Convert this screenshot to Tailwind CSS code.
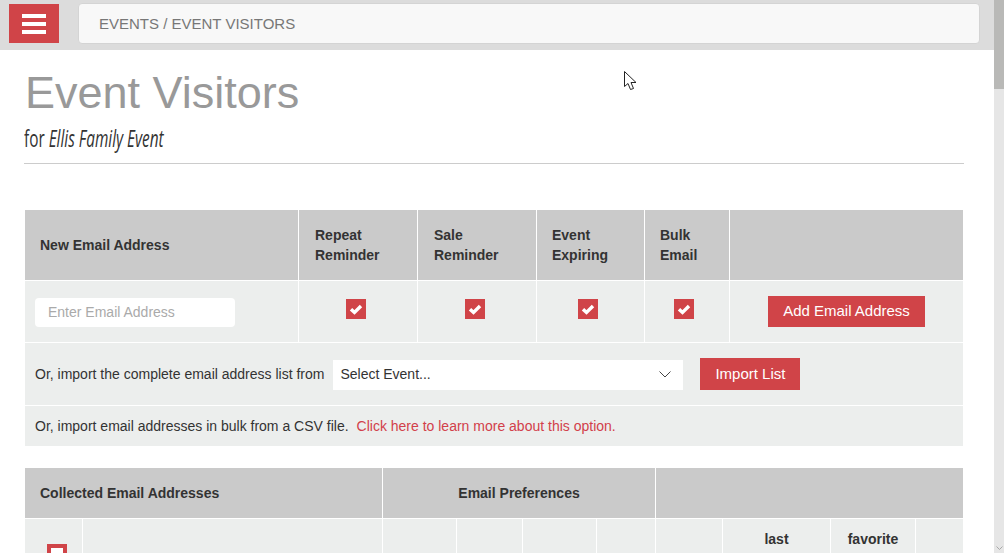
<!DOCTYPE html>
<html lang="en">
<head>
  <meta charset="UTF-8" />
  <title>Event Visitors</title>
  <script src="https://cdn.jsdelivr.net/npm/@tailwindcss/browser@4"></script>
</head>
<body class="bg-white overflow-hidden font-['Liberation_Sans',Arial,sans-serif] text-[14px] text-[#333]">
<div class="relative flex h-[553px] w-[1004px] overflow-hidden">

  <div class="w-[994px] shrink-0">
    <!-- top bar -->
    <header class="flex h-[50px] bg-[#dcdcdc] pl-[9px] pt-[3px]">
      <button class="mt-px flex h-[39px] w-[50px] flex-col items-center justify-center gap-[4px] bg-[#d04448]">
        <span class="h-[4px] w-[24px] bg-white"></span>
        <span class="h-[4px] w-[24px] bg-white"></span>
        <span class="h-[4px] w-[24px] bg-white"></span>
      </button>
      <div class="ml-[19px] flex h-[41px] w-[902px] items-center rounded-[4px] border border-[#d4d4d4] bg-[#f8f8f8] pl-[20px] pt-[1px] text-[15px] text-[#777]">EVENTS / EVENT VISITORS</div>
    </header>

    <main class="pl-[24px] pr-[30px]">
      <h1 class="mt-[16px] pl-px text-[45px] leading-[54px] text-[#999]">Event Visitors</h1>
      <p class="mt-[3px] h-[29px] origin-left scale-x-[.64] whitespace-nowrap font-['Open_Sans',sans-serif] text-[24px] leading-[29px] font-normal text-[#333]">for <em>Ellis Family Event</em></p>
      <hr class="mt-[11px] border-[#ccc]" />

      <!-- new email address -->
      <section class="mt-[46px] ml-px w-[938px]">
        <div class="grid h-[71px] grid-cols-[274px_119px_119px_108px_85px_233px] border-b border-white bg-[#cacaca] font-bold leading-[20px]">
          <div class="flex items-center border-r border-white pl-[15px]">New Email Address</div>
          <div class="flex items-center border-r border-white pl-[16px]">Repeat<br />Reminder</div>
          <div class="flex items-center border-r border-white pl-[16px]">Sale<br />Reminder</div>
          <div class="flex items-center border-r border-white pl-[15px]">Event<br />Expiring</div>
          <div class="flex items-center border-r border-white pl-[15px]">Bulk<br />Email</div>
          <div></div>
        </div>
        <div class="grid h-[62px] grid-cols-[274px_119px_119px_108px_85px_233px] border-b border-white bg-[#eceeed]">
          <div class="border-r border-white pl-[10px] pt-[17px]">
            <div class="flex h-[29px] w-[200px] items-center rounded-[4px] bg-white pl-[13px] text-[#aaa]">Enter Email Address</div>
          </div>
          <div class="flex justify-center border-r border-white pr-[4px] pt-[18px]">
            <span class="flex size-[20px] items-center justify-center bg-[#d04448]"><svg width="14" height="12" viewBox="0 0 14 12"><path d="M2 6.2 L5.5 9.5 L12 3" fill="none" stroke="#fff" stroke-width="3.4"/></svg></span>
          </div>
          <div class="flex justify-center border-r border-white pr-[4px] pt-[18px]">
            <span class="flex size-[20px] items-center justify-center bg-[#d04448]"><svg width="14" height="12" viewBox="0 0 14 12"><path d="M2 6.2 L5.5 9.5 L12 3" fill="none" stroke="#fff" stroke-width="3.4"/></svg></span>
          </div>
          <div class="flex justify-center border-r border-white pr-[6px] pt-[18px]">
            <span class="flex size-[20px] items-center justify-center bg-[#d04448]"><svg width="14" height="12" viewBox="0 0 14 12"><path d="M2 6.2 L5.5 9.5 L12 3" fill="none" stroke="#fff" stroke-width="3.4"/></svg></span>
          </div>
          <div class="flex justify-center border-r border-white pr-[6px] pt-[18px]">
            <span class="flex size-[20px] items-center justify-center bg-[#d04448]"><svg width="14" height="12" viewBox="0 0 14 12"><path d="M2 6.2 L5.5 9.5 L12 3" fill="none" stroke="#fff" stroke-width="3.4"/></svg></span>
          </div>
          <div class="pl-[38px] pt-[15px]">
            <button class="h-[31px] w-[157px] bg-[#d04448] text-[15px] text-white">Add Email Address</button>
          </div>
        </div>
        <div class="flex h-[63px] items-center border-b border-white bg-[#eceeed] pl-[10px]">
          <span>Or, import the complete email address list from</span>
          <div class="ml-[9px] mt-[2px] flex h-[30px] w-[350px] items-center justify-between bg-white pb-[2px] pl-[7px] pr-[12px]">
            Select Event...
            <svg width="12" height="7" viewBox="0 0 12 7"><path d="M.5.5 L6 6 L11.5.5" fill="none" stroke="#444" stroke-width="1"/></svg>
          </div>
          <button class="ml-[17px] h-[32px] w-[100px] bg-[#d04448] text-[15px] text-white">Import List</button>
        </div>
        <div class="flex h-[40px] items-center bg-[#eceeed] pl-[10px]">
          Or, import email addresses in bulk from a CSV file.
          <a href="#" class="ml-[8px] text-[#d2404a]">Click here to learn more about this option.</a>
        </div>
      </section>

      <!-- collected addresses -->
      <section class="mt-[22px] ml-px w-[938px]">
        <div class="grid h-[51px] grid-cols-[358px_273px_307px] items-stretch border-b border-white bg-[#cacaca] font-bold">
          <div class="flex items-center border-r border-white pl-[15px]">Collected Email Addresses</div>
          <div class="flex items-center justify-center border-r border-white">Email Preferences</div>
          <div></div>
        </div>
        <div class="grid h-[60px] grid-cols-[58px_300px_74px_66px_74px_59px_67px_108px_85px_47px] bg-[#eceeed] font-bold">
          <div class="border-r border-white pl-[22px] pt-[25px]"><span class="block size-[20px] border-[4px] border-[#d04448] bg-white"></span></div>
          <div class="border-r border-white"></div>
          <div class="border-r border-white"></div>
          <div class="border-r border-white"></div>
          <div class="border-r border-white"></div>
          <div class="border-r border-white"></div>
          <div class="border-r border-white"></div>
          <div class="border-r border-white pt-[10px] text-center leading-[20px]">last</div>
          <div class="border-r border-white pt-[10px] text-center leading-[20px]">favorite</div>
          <div></div>
        </div>
      </section>
    </main>
  </div>

  <!-- scrollbar -->
  <div class="relative h-full w-[10px] bg-[#e6e6e6]">
    <div class="h-[89px] bg-[#b9b9b7]"></div>
    <svg class="absolute bottom-[2px] left-[2px]" width="7" height="5" viewBox="0 0 7 5"><path d="M.5.5 L3.5 3.5 L6.5.5" fill="none" stroke="#a8a8a8" stroke-width="1"/></svg>
  </div>

  <!-- mouse pointer -->
  <svg class="absolute left-[624px] top-[71px]" width="13" height="20" viewBox="0 0 13 20"><path d="M.5.5 V15.5 L4 12.5 L6.5 18.5 L9.5 17.5 L7 11.5 H12 Z" fill="#fff" stroke="#222" stroke-width="1"/></svg>
</div>
</body>
</html>
